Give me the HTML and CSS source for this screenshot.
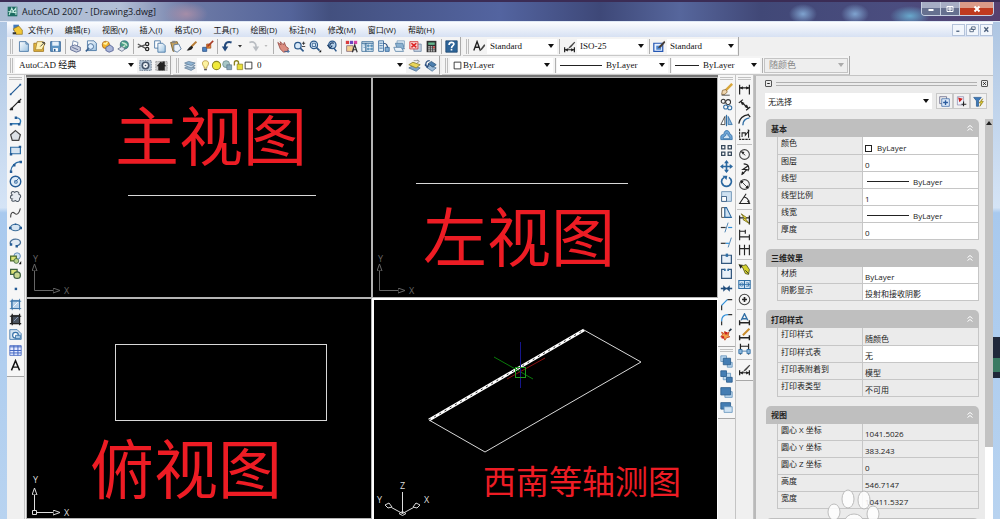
FILE: index.html
```html
<!DOCTYPE html>
<html lang="zh-CN">
<head>
  <meta charset="UTF-8">
  <title>AutoCAD 2007 - [Drawing3.dwg]</title>
  <link rel="stylesheet" href="styles.css">
</head>
<body>
<svg class="sprite" aria-hidden="true">
  <defs>
    <linearGradient id="sheet" x1="0" y1="0" x2="1" y2="1"><stop offset="0" stop-color="#fff"/><stop offset="1" stop-color="#9cc3e2"/></linearGradient>
    <marker id="tip" viewBox="0 0 8 6" refX="0" refY="3" markerWidth="8" markerHeight="6" markerUnits="userSpaceOnUse" orient="auto"><path d="M0 0.5 7 3 0 5.5z" fill="none" stroke="context-stroke"/></marker>
  </defs>

  <!-- standard toolbar -->
  <symbol id="new" viewBox="0 0 16 16"><path d="M3 2h8l3 3v9H3z" fill="url(#sheet)" stroke="#3f6f9f"/><path d="M11 2v3h3" stroke="#3f6f9f"/></symbol>
  <symbol id="open" viewBox="0 0 16 16"><path d="M1 14V4h5l1 2h6v8z" fill="#e9b93c" stroke="#9a7422"/><path d="M5 2h7l3 2-4 8H3z" fill="#fff3b8" stroke="#a88430"/><path d="M9 8l5-5m-3 0h3v3" stroke="#333"/></symbol>
  <symbol id="save" viewBox="0 0 16 16"><path d="M2 2h12v12H2z" fill="#5e95c4" stroke="#2d5f91"/><path d="M4 2h8v5H4z" fill="#e7f1fa"/><path d="M5 10h6v4H5z" fill="#fff"/><path d="M6 11h2v3H6z" fill="#2d5f91"/></symbol>
  <symbol id="plot" viewBox="0 0 16 16"><path d="M5 1l6 2-1 6-6-2z" fill="#fff" stroke="#6780a8"/><path d="M2 8l5-2 7 3v4l-5 2-7-3z" fill="#c5cbdd" stroke="#515f8a"/><path d="M4 9l7 3" stroke="#515f8a"/></symbol>
  <symbol id="preview" viewBox="0 0 16 16"><path d="M3 1h8l3 3v9H3z" fill="url(#sheet)" stroke="#3f6f9f"/><circle cx="7" cy="8" r="3.500" fill="#dceeff" stroke="#355d8a"/><path d="M4.500 10.500 1 14" stroke="#355d8a" stroke-width="2"/></symbol>
  <symbol id="publish" viewBox="0 0 16 16"><circle cx="6" cy="6" r="4.500" fill="#f4b52c" stroke="#a5631e"/><path d="M3 4l3 1 2-3" stroke="#fff3a0" stroke-width="2"/><path d="M6 9l5-3 4 3v4l-5 2-4-2z" fill="#a9b5d8" stroke="#4c5a90"/></symbol>
  <symbol id="dwf" viewBox="0 0 16 16"><circle cx="9" cy="6" r="5" fill="#4a9e84" stroke="#346a80"/><path d="M6 3c3 2 5 0 6 4M7 9l3-2" stroke="#c9e7d6" stroke-width="2"/><path d="M1 11l5-3 4 3-4 3z" fill="#dce2ed" stroke="#657089"/></symbol>
  <symbol id="cut" viewBox="0 0 16 16"><path d="M1 5l9 5M1 9l9-3" stroke="#555" stroke-width="1.500"/><circle cx="12.500" cy="5" r="2" stroke="#222" stroke-width="1.500"/><circle cx="12.500" cy="11" r="2" stroke="#222" stroke-width="1.500"/></symbol>
  <symbol id="copyclip" viewBox="0 0 16 16"><path d="M2 1h7v9H2z" fill="#fff" stroke="#3f6f9f"/><path d="M6 4h6l3 3v8H6z" fill="url(#sheet)" stroke="#3f6f9f"/></symbol>
  <symbol id="paste" viewBox="0 0 16 16"><path d="M2 3l8-1 3 9-8 3z" fill="#c9a35c" stroke="#735a2a"/><path d="M6 6l6-1 3 6-5 4-4-2z" fill="#eef4fb" stroke="#56779c"/><path d="M4 1h4v3H4z" fill="#888"/></symbol>
  <symbol id="match" viewBox="0 0 16 16"><path d="M14 2L8 8" stroke="#b67b34" stroke-width="2.500"/><path d="M8 7l2 2c-2 4-5 4-8 4 2-2 3-5 6-6z" fill="#222"/></symbol>
  <symbol id="block" viewBox="0 0 16 16"><path d="M2 9h5v5H2z" fill="#4d83c2" stroke="#2b5389"/><path d="M7 5h5v5H7z" fill="#e48c32" stroke="#a24d1e"/><path d="M15 1l-7 7" stroke="#a83a26" stroke-width="2"/></symbol>
  <symbol id="undo" viewBox="0 0 16 16"><path d="M13 3C8 1 4 4 5 10" stroke="#244a7c" stroke-width="2.500"/><path d="M1 8h8l-4 6z" fill="#244a7c"/></symbol>
  <symbol id="redo" viewBox="0 0 16 16"><path d="M3 3c5-2 9 1 8 7" stroke="#b9bdc2" stroke-width="2"/><path d="M15 8H7l4 6z" fill="#b9bdc2"/></symbol>
  <symbol id="drop" viewBox="0 0 16 16"><path d="M4 6h8l-4 5z" fill="#333"/></symbol>
  <symbol id="dropoff" viewBox="0 0 16 16"><path d="M5 6h6l-3 4z" fill="#bbb"/></symbol>
  <symbol id="pan" viewBox="0 0 16 16"><path d="M1 3l4 3-1-4 4 4 1-3 2 5 3 2-1 4-5 1-4-4z" fill="#dc8d80" stroke="#954a42"/><path d="M9 14h6m-2-2 2 2-2 2" stroke="#2c5f99"/></symbol>
  <symbol id="zoomrt" viewBox="0 0 16 16"><circle cx="6" cy="7" r="4" fill="#d8e9f8" stroke="#2b588a" stroke-width="1.500"/><path d="M9 10l4 4" stroke="#2b588a" stroke-width="2"/><path d="M11 4h4M13 2v4M11 8h4" stroke="#222"/></symbol>
  <symbol id="zoomwin" viewBox="0 0 16 16"><circle cx="6" cy="6" r="4.500" fill="#d8e9f8" stroke="#2b588a" stroke-width="1.500"/><path d="M4 4h4v4H4z" stroke="#2b588a"/><path d="M9 9l4 4" stroke="#2b588a" stroke-width="2"/><path d="M12 15h3v-3z" fill="#111"/></symbol>
  <symbol id="zoomprev" viewBox="0 0 16 16"><circle cx="9" cy="6" r="4.500" fill="#b5d0e9" stroke="#2b588a" stroke-width="1.500"/><path d="M11 4c-3-1-5 0-5 3m-3-1 3 4 3-3" stroke="#183a63" stroke-width="1.500"/><path d="M11 10l3 4" stroke="#2b588a" stroke-width="2"/></symbol>
  <symbol id="props" viewBox="0 0 16 16"><path d="M1 1h4v4H1z" fill="#d93b3b"/><path d="M6 1h4v4H6z" fill="#6a45c0"/><path d="M11 1h4v4h-4z" fill="#d743a4"/><path d="M2 7h8v7H2z" fill="#f4d08e" stroke="#8b6a7a"/><path d="M9 15l3-9 3 9m-5-3h4" stroke="#333" stroke-width="1.500"/></symbol>
  <symbol id="dcenter" viewBox="0 0 16 16"><path d="M1 2h14v12H1z" fill="#e6f0f8" stroke="#3a6c97"/><path d="M1 4h14M6 4v10" stroke="#3a6c97" stroke-width="1.500"/><path d="M8 6h2v2H8zM12 6h2v2h-2zM8 10h2v2H8zM12 10h2v2h-2zM3 6h2M3 9h2" fill="#5a91b9" stroke="#5a91b9"/></symbol>
  <symbol id="palettes" viewBox="0 0 16 16"><path d="M2 1h6v13H2z" fill="#dcebf7" stroke="#2f6298"/><path d="M3 4h4M3 7h4M3 10h4" stroke="#2f6298"/><path d="M8 4c4 0 5 2 5 7" stroke="#244a7c" stroke-width="1.500"/><path d="M10 9h5v5h-5z" fill="#84afd4" stroke="#2f6298"/></symbol>
  <symbol id="sheets" viewBox="0 0 16 16"><path d="M5 1h9v7H5z" fill="#dbe9f4" stroke="#7fa0bd"/><path d="M3 4h9l2 7H5z" fill="#8ab1d0" stroke="#5680a5"/><path d="M1 9h9l3 5H3z" fill="#e9f1f8" stroke="#5680a5"/></symbol>
  <symbol id="markup" viewBox="0 0 16 16"><path d="M6 5h9v9H6z" fill="#c5d3e3" stroke="#7088a5"/><path d="M1 2h10v9H1z" fill="#f7d4d4" stroke="#c33"/><path d="M3 4l6 5m0-5-6 5" stroke="#d22" stroke-width="2"/></symbol>
  <symbol id="calc" viewBox="0 0 16 16"><path d="M2 1h12v14H2z" fill="#303030"/><path d="M4 3h8v3H4z" fill="#63b58c"/><path d="M4 8.500h8M4 11h8M4 13.500h8" stroke="#ddd" stroke-dasharray="2 1" stroke-width="1.500"/><path d="M10 8h2v2h-2z" fill="#d33"/></symbol>
  <symbol id="help" viewBox="0 0 16 16"><path d="M1 1h14v14H1z" fill="#2d6498" stroke="#1f4870"/><path d="M5 6c0-4 6-4 6-1 0 2-3 2-3 5m0 1v2" stroke="#fff" stroke-width="2"/></symbol>
  <symbol id="textstyle" viewBox="0 0 16 16"><path d="M1 13L5 2l4 11M3 9h5" stroke="#222" stroke-width="1.700"/><path d="M8 14l2-4 4-5 1 2-4 5z" fill="#444"/></symbol>
  <symbol id="dimstyle" viewBox="0 0 16 16"><path d="M2 9v6M14 9v6M2 12h12" stroke="#222" stroke-width="1.500"/><path d="M2 12l4-2v4zM14 12l-4-2v4z" fill="#222"/><path d="M14 2L8 8l-2 3 4-2 5-6z" fill="#444"/></symbol>
  <symbol id="tablestyle" viewBox="0 0 16 16"><path d="M1 4h11v10H1z" fill="#e8f1ff" stroke="#2457b4" stroke-width="1.500"/><path d="M4 7h6v5H4z" fill="#4d85ce"/><path d="M14 1L8 7l-2 3 4-1 5-6z" fill="#443c36"/></symbol>

  <!-- workspaces and layers -->
  <symbol id="gear" viewBox="0 0 16 16"><path d="M1 2h14v12H1z" fill="#b9cadb" stroke="#586b80" stroke-dasharray="2 1"/><circle cx="8" cy="8" r="4" fill="#f5f8fb" stroke="#45566b" stroke-width="2"/><circle cx="8" cy="8" r="1" fill="#45566b"/></symbol>
  <symbol id="wshome" viewBox="0 0 16 16"><path d="M1 3h14v11H1z" fill="#ccc" stroke="#999" stroke-dasharray="2 1"/><path d="M2 9l5-6 2 2V3h3v4l2 2h-2v5H4V9z" fill="#222"/></symbol>
  <symbol id="layers" viewBox="0 0 16 16"><path d="M2 11l5-2 8 2-5 3z" fill="#9db6cc" stroke="#68849f"/><path d="M2 8l5-2 8 2-5 3z" fill="#c9dceb" stroke="#68849f"/><path d="M2 5l5-2 8 2-5 3z" fill="#8fb4d3" stroke="#68849f"/></symbol>
  <symbol id="layercur" viewBox="0 0 16 16"><path d="M1 11l5-3 9 3-5 4z" fill="#7da3c7" stroke="#4d7397"/><path d="M1 7l5-3 9 3-5 4z" fill="#e9d65a" stroke="#877b2e"/><path d="M7 2h6m-2-1 3 2-3 2" stroke="#888"/></symbol>
  <symbol id="layerprev" viewBox="0 0 16 16"><path d="M3 10l5-2 7 3-5 4z" fill="#9dbbd7" stroke="#4f779d"/><path d="M5 6l4-3 6 4-4 3z" fill="#4c7fae" stroke="#31577d"/><path d="M7 2C3 2 1 5 3 9M1 7l3 3 2-4" stroke="#244a7c" stroke-width="1.500"/></symbol>
  <symbol id="bulb" viewBox="0 0 16 16"><path d="M8 1c-6 0-5 6-2 9v2h4v-2c3-3 4-9-2-9z" fill="#fdf3a0" stroke="#a9862c"/><path d="M6 14h4" stroke="#555" stroke-width="2"/></symbol>
  <symbol id="sun" viewBox="0 0 16 16"><circle cx="8" cy="8" r="6" fill="#f1ea3b" stroke="#8e8a25" stroke-width="1.500"/></symbol>
  <symbol id="vpsun" viewBox="0 0 16 16"><circle cx="6" cy="6" r="5" fill="#a9c7c7" stroke="#628084"/><path d="M7 7h7v7H7z" fill="#8aa9bb" stroke="#5b7588"/></symbol>
  <symbol id="lock" viewBox="0 0 16 16"><path d="M2 8V4c0-4 6-4 6 0v3" stroke="#8c8222" stroke-width="2"/><path d="M6 6h8v8H6z" fill="#e8df3a" stroke="#8c8222"/></symbol>
  <symbol id="swatch" viewBox="0 0 16 16"><path d="M2 2h12v12H2z" fill="#fff" stroke="#222" stroke-width="1.500"/></symbol>

  <!-- draw -->
  <symbol id="line" viewBox="0 0 16 16"><path d="M2 14L14 2" stroke="#245c96" stroke-width="1.500"/><path d="M1 13h2v2H1zM13 1h2v2h-2z" fill="#245c96"/></symbol>
  <symbol id="xline" viewBox="0 0 16 16"><path d="M1 15L15 1" stroke="#222" stroke-width="1.500"/><path d="M2 12h3v3H2zM11 3h3v3h-3z" fill="#222"/></symbol>
  <symbol id="pline" viewBox="0 0 16 16"><path d="M2 12h11c3-4 0-8-5-7" stroke="#2f79b5" stroke-width="1.700"/><path d="M1 11h3v3H1zM11 11h3v3h-3zM7 3h3v3H7z" fill="#245c96"/></symbol>
  <symbol id="polygon" viewBox="0 0 16 16"><path d="M8 2l6 5-2 7H4L2 7z" fill="#dde2e7" stroke="#444" stroke-width="1.500"/></symbol>
  <symbol id="rect" viewBox="0 0 16 16"><path d="M2 4h12v8H2z" fill="#d7e4f0" stroke="#2f6ea5" stroke-width="1.500"/><path d="M1 11h3v3H1zM12 2h3v3h-3z" fill="#245c96"/></symbol>
  <symbol id="arc" viewBox="0 0 16 16"><path d="M2 14C3 7 7 3 14 2" stroke="#2f6ea5" stroke-width="1.500"/><path d="M1 13h3v3H1zM5 5h3v3H5zM13 1h3v3h-3z" fill="#245c96"/></symbol>
  <symbol id="circle" viewBox="0 0 16 16"><circle cx="8" cy="8" r="6.500" fill="#e0edf8" stroke="#245c96" stroke-width="1.700"/><path d="M8 8l4-4M7 7h3v3H7z" stroke="#245c96"/></symbol>
  <symbol id="revcloud" viewBox="0 0 16 16"><path d="M4 6c-3-2 0-6 3-3 2-2 6-1 5 2 3 1 3 4 1 5 1 4-3 5-5 3-3 2-6 0-4-2-3 0-3-4 0-5z" fill="#e6ebf1" stroke="#4d5763" stroke-width="1.300"/></symbol>
  <symbol id="spline" viewBox="0 0 16 16"><path d="M2 14c0-7 3-7 5-5s5 2 7-6" stroke="#444" stroke-width="1.300"/></symbol>
  <symbol id="ellipse" viewBox="0 0 16 16"><ellipse cx="8" cy="8" rx="6" ry="4" fill="#d6e5f2" stroke="#3c6d99" stroke-width="1.500"/><path d="M0 7h3v3H0zM13 7h3v3h-3zM7 3h2v2H7z" fill="#245c96"/></symbol>
  <symbol id="ellarc" viewBox="0 0 16 16"><path d="M2 10C0 6 5 3 10 4s6 6 0 8" fill="#e2ebf4" stroke="#4a7199" stroke-width="1.500"/><path d="M1 9h3v3H1zM8 11h3v3H8z" fill="#245c96"/></symbol>
  <symbol id="insert" viewBox="0 0 16 16"><circle cx="10" cy="5" r="4" fill="#cfe2f2" stroke="#4c7db0"/><path d="M2 5h7v6H2z" fill="#dce276" stroke="#4c6b2c" stroke-width="1.500"/><circle cx="9" cy="11" r="3" fill="#b7d08a" stroke="#3e6640"/><path d="M12 15h3v-4z" fill="#111"/></symbol>
  <symbol id="mkblock" viewBox="0 0 16 16"><path d="M2 3h8v6H2z" fill="#dce276" stroke="#3d6040" stroke-width="1.500"/><circle cx="10" cy="10" r="4" fill="#c8d790" stroke="#3d6040" stroke-width="1.500"/></symbol>
  <symbol id="point" viewBox="0 0 16 16"><path d="M7 7h3v3H7z" fill="#245c96"/></symbol>
  <symbol id="hatch" viewBox="0 0 16 16"><path d="M3 3h10v10H3z" fill="#b8d2ea" stroke="#3671a7"/><path d="M1 4h14M1 13h14M4 1v14M13 1v14" stroke="#3671a7"/><path d="M5 11l6-6" stroke="#fff"/></symbol>
  <symbol id="gradient" viewBox="0 0 16 16"><path d="M3 3h10v10H3z" fill="#4b5560" stroke="#222"/><path d="M1 4h14M1 13h14M4 1v14M13 1v14" stroke="#222" stroke-width="1.500"/><path d="M6 10l5-5" stroke="#9ac"/></symbol>
  <symbol id="region" viewBox="0 0 16 16"><path d="M1 2h9l5 5v7H1z" fill="#d4e4f2" stroke="#3671a7"/><circle cx="8" cy="9" r="3.500" fill="#fff" stroke="#3671a7" stroke-width="1.500"/><path d="M8 9h6v4H8z" fill="#a9c9e4" stroke="#3671a7"/></symbol>
  <symbol id="table" viewBox="0 0 16 16"><path d="M1 2h14v12H1z" fill="#e6ebff" stroke="#4165c0"/><path d="M1 3.500h14M1 8h14M1 11h14M6 2v12M11 2v12" stroke="#4165c0" stroke-width="1.200"/></symbol>
  <symbol id="mtext" viewBox="0 0 16 16"><path d="M3 14L8 2l5 12M5 10h6" stroke="#111" stroke-width="1.800"/></symbol>

  <!-- modify -->
  <symbol id="erase" viewBox="0 0 16 16"><path d="M15 1L7 9" stroke="#d8a63a" stroke-width="3"/><path d="M3 9l4-1 2 3-3 3H2z" fill="#f0d7b0" stroke="#8b6a3c"/><path d="M2 15h10" stroke="#333"/></symbol>
  <symbol id="copy" viewBox="0 0 16 16"><circle cx="4" cy="4" r="2.500" stroke="#333" stroke-width="1.300"/><circle cx="10" cy="5" r="3" stroke="#333" stroke-width="1.300"/><circle cx="7" cy="11" r="2.500" stroke="#2f6ea5" stroke-width="1.300"/><circle cx="12" cy="12" r="2.500" stroke="#2f6ea5" stroke-width="1.300"/></symbol>
  <symbol id="mirror" viewBox="0 0 16 16"><path d="M6 3v10H1z" fill="#fff" stroke="#333"/><path d="M10 3v10h5z" fill="#8db7dc" stroke="#2f6ea5"/><path d="M8 1v14" stroke="#2f6ea5" stroke-width="1.500"/></symbol>
  <symbol id="offset" viewBox="0 0 16 16"><path d="M1 13V9c0-2 3-2 4-3 0-6 7-5 7 0 3 1 3 3 3 7z" fill="#6ea5d6" stroke="#2f6ea5"/><path d="M4 12v-2l3-2c0-3 3-3 3 0l2 2v2z" fill="#d3e5f5" stroke="#2f6ea5"/></symbol>
  <symbol id="array" viewBox="0 0 16 16"><path d="M2 2h4v4H2zM10 2h4v4h-4zM2 10h4v4H2zM10 10h4v4h-4z" fill="#fff" stroke="#35475a" stroke-width="1.500"/></symbol>
  <symbol id="move" viewBox="0 0 16 16"><path d="M8 2v12M2 8h12" stroke="#2a679f" stroke-width="2"/><path d="M8 0l3 4H5zM8 16l3-4H5zM0 8l4-3v6zM16 8l-4-3v6z" fill="#2a679f"/></symbol>
  <symbol id="rotate" viewBox="0 0 16 16"><path d="M5 3c-6 4-2 11 3 11s9-7 3-11" stroke="#2a679f" stroke-width="2"/><path d="M3 1h6l-1 5z" fill="#2a679f"/></symbol>
  <symbol id="scale" viewBox="0 0 16 16"><path d="M2 2h12v12H2z" fill="#cfe1f1" stroke="#5f88ad"/><path d="M2 8h6v6H2z" fill="#fff" stroke="#2a4f78"/></symbol>
  <symbol id="stretch" viewBox="0 0 16 16"><path d="M2 2h4v12H2z" fill="#fff" stroke="#333"/><path d="M6 2h2l6 12H6z" fill="#cfe1f1" stroke="#2a679f" stroke-width="1.300"/></symbol>
  <symbol id="trim" viewBox="0 0 16 16"><path d="M6 14l4-12" stroke="#2f6ea5"/><path d="M1 8h6" stroke="#333" stroke-width="1.500"/><path d="M10 8h5" stroke="#2f8fd8" stroke-width="1.500"/></symbol>
  <symbol id="extend" viewBox="0 0 16 16"><path d="M10 14l4-12" stroke="#2f6ea5"/><path d="M1 9h6" stroke="#333" stroke-width="1.500"/><path d="M7 9h4" stroke="#2f8fd8" stroke-width="1.500"/></symbol>
  <symbol id="breakpt" viewBox="0 0 16 16"><path d="M2 4h12v10H2z" fill="#e8f0f8" stroke="#33587e" stroke-width="1.500"/><path d="M7 2h3v4H7z" fill="#2f6ea5"/></symbol>
  <symbol id="break" viewBox="0 0 16 16"><path d="M6 3H2v11h12V3h-4" fill="#e8f0f8" stroke="#33587e" stroke-width="1.500"/><path d="M5 2h2v3H5zM9 2h2v3H9z" fill="#2f6ea5"/></symbol>
  <symbol id="join" viewBox="0 0 16 16"><path d="M1 8h14" stroke="#1f4c7c" stroke-width="2"/><path d="M8 8L4 4v8zM8 8l4-4v8z" fill="#1f4c7c"/></symbol>
  <symbol id="chamfer" viewBox="0 0 16 16"><path d="M2 15V9M9 2h6" stroke="#333" stroke-width="1.500"/><path d="M2 9l7-7" stroke="#2f8fd8" stroke-width="1.500"/></symbol>
  <symbol id="fillet" viewBox="0 0 16 16"><path d="M2 15v-5M10 2h5" stroke="#333" stroke-width="1.500"/><path d="M2 10c0-5 3-8 8-8" stroke="#2f8fd8" stroke-width="1.500"/></symbol>
  <symbol id="explode" viewBox="0 0 16 16"><path d="M6 4l2 3 3-2-1 4 2 2-4 1-2 3-2-4-3 0 2-3-1-3 3 2z" fill="#f0a04a" stroke="#c2401c"/><path d="M2 10h3v3H2zM6 5h3v3H6z" fill="#c22"/><path d="M11 4l3-3" stroke="#234" stroke-width="2"/></symbol>
  <symbol id="front" viewBox="0 0 16 16"><path d="M1 1h7v7H1zM9 9h6v6H9z" fill="#b9d6ee" stroke="#6393bb"/><path d="M4 4h9v8H4z" fill="#447db3" stroke="#2a5c8c"/></symbol>
  <symbol id="back" viewBox="0 0 16 16"><path d="M4 4h9v8H4z" fill="#bcd8ee" stroke="#6393bb"/><path d="M1 1h7v7H1zM8 9h7v6H8z" fill="#447db3" stroke="#2a5c8c"/></symbol>
  <symbol id="above" viewBox="0 0 16 16"><path d="M6 7h9v7H6z" fill="#bcd8ee" stroke="#6393bb"/><path d="M1 2h12v9H1z" fill="#447db3" stroke="#2a5c8c"/></symbol>
  <symbol id="under" viewBox="0 0 16 16"><path d="M1 2h12v8H1z" fill="#447db3" stroke="#2a5c8c"/><path d="M5 7h10v7H5z" fill="#cfe3f3" stroke="#6393bb"/></symbol>

  <!-- dimension -->
  <symbol id="dimlin" viewBox="0 0 16 16"><path d="M2 2v12M14 2v12M2 6h12" stroke="#222" stroke-width="1.500"/><path d="M2 6l4-2v4zM14 6l-4-2v4z" fill="#222"/></symbol>
  <symbol id="dimali" viewBox="0 0 16 16"><path d="M1 6l5-4M10 15l5-4M3 4l10 9" stroke="#222" stroke-width="1.500"/><path d="M3 4l5 2-3 3zM13 13l-5-2 3-3z" fill="#222"/></symbol>
  <symbol id="dimarc" viewBox="0 0 16 16"><path d="M1 13C2 6 6 3 13 2M12 1l3 4" stroke="#222" stroke-width="1.500"/><path d="M6 15c0-5 2-8 8-9" stroke="#2f6ea5" stroke-width="1.700"/></symbol>
  <symbol id="dimord" viewBox="0 0 16 16"><path d="M2 1v13h13" stroke="#222" stroke-width="1.300" stroke-dasharray="3 1"/><path d="M5 11V6h4v3l4-5v8M12 2l2 2" stroke="#222" stroke-width="1.300"/></symbol>
  <symbol id="dimrad" viewBox="0 0 16 16"><circle cx="8" cy="8" r="6" stroke="#444" stroke-width="1.300"/><path d="M9 9L3 4" stroke="#222"/><path d="M4 4l4 1-2 3z" fill="#222"/></symbol>
  <symbol id="dimjog" viewBox="0 0 16 16"><path d="M7 1c6 0 8 5 5 9M13 3L6 8h5l-6 6" stroke="#222" stroke-width="1.400"/><path d="M4 15l1-5 3 3z" fill="#222"/></symbol>
  <symbol id="dimdia" viewBox="0 0 16 16"><circle cx="8" cy="8" r="6" stroke="#444" stroke-width="1.300"/><path d="M4 4l8 8" stroke="#222"/><path d="M3 3l4 1-3 3zM13 13l-4-1 3-3z" fill="#222"/></symbol>
  <symbol id="dimang" viewBox="0 0 16 16"><path d="M10 1L2 13h13M7 5c4 0 6 3 7 8" stroke="#222" stroke-width="1.300"/><path d="M14 13l-3-3 3-1z" fill="#222"/></symbol>
  <symbol id="qdim" viewBox="0 0 16 16"><path d="M2 3v11M14 3v11M2 6h12" stroke="#222" stroke-width="1.500"/><path d="M4 1l7 5-2 1 5 6-8-5 2-1z" fill="#f0e13a" stroke="#6d6414"/></symbol>
  <symbol id="dimbase" viewBox="0 0 16 16"><path d="M2 2v13M9 2v5M14 8v7M2 4h7M2 11h12" stroke="#222" stroke-width="1.400"/></symbol>
  <symbol id="dimcont" viewBox="0 0 16 16"><path d="M2 2v13M8 2v13M14 2v13M2 7h12" stroke="#222" stroke-width="1.400"/></symbol>
  <symbol id="leader" viewBox="0 0 16 16"><path d="M1 2l6 1 3-1 4 6-1 6-4-1-3-7z" fill="#d5d22e" stroke="#4e4d19"/><path d="M1 2l5 1-3 4z" fill="#222"/><path d="M9 9l4 4" stroke="#222"/></symbol>
  <symbol id="toler" viewBox="0 0 16 16"><path d="M1 3h14v10H1zM8 3v10" fill="#d4e6f5" stroke="#2f6ea5" stroke-width="1.300"/><circle cx="4.500" cy="8" r="2" stroke="#2f6ea5"/><path d="M10 6h3v4h-3M1 8h14" stroke="#2f6ea5"/></symbol>
  <symbol id="center" viewBox="0 0 16 16"><circle cx="8" cy="8" r="6.500" stroke="#444" stroke-width="1.300"/><path d="M8 5v6M5 8h6" stroke="#222" stroke-width="2"/></symbol>
  <symbol id="dimedit" viewBox="0 0 16 16"><path d="M4 9l4-8 4 8M5 7h6" stroke="#2f6ea5" stroke-width="1.700"/><path d="M2 9v6M14 9v6M2 12h12" stroke="#222" stroke-width="1.700"/></symbol>
  <symbol id="dimtedit" viewBox="0 0 16 16"><path d="M14 1L6 9" stroke="#c98b2a" stroke-width="2.500"/><path d="M2 9v6M14 9v6M2 12h12" stroke="#222" stroke-width="1.700"/></symbol>
  <symbol id="dimupd" viewBox="0 0 16 16"><path d="M3 1v13M13 1v13M3 4h10" stroke="#222" stroke-width="1.500"/><path d="M1 8h4v5H1zM11 8h4v5h-4zM5 10h6" fill="#8cb6da" stroke="#2f6ea5"/></symbol>

  <!-- properties palette -->
  <symbol id="pickadd" viewBox="0 0 16 16"><path d="M1 1h10v10H1z" stroke="#557"/><path d="M4 4h11v11H4z" fill="#e1edfb" stroke="#2b5c9e"/><path d="M9.500 6v7M6 9.500h7" stroke="#2b5c9e" stroke-width="2"/></symbol>
  <symbol id="selobj" viewBox="0 0 16 16"><path d="M2 1h9v12H2z" fill="#eef3fa" stroke="#88a"/><path d="M3 2l7 2-5 5z" fill="#c22"/><path d="M11 8v7M8 12h7" stroke="#222" stroke-width="1.500"/></symbol>
  <symbol id="qselect" viewBox="0 0 16 16"><path d="M1 2h11l-4 5v8H5V7z" fill="#3d79b8" stroke="#23548b"/><path d="M14 4l-5 6h3l-2 5 5-7h-3z" fill="#f2dc30" stroke="#8d7d19"/></symbol>
  <symbol id="chev" viewBox="0 0 16 16"><path d="M3 7l5-4 5 4M3 13l5-4 5 4" stroke="#fff" stroke-width="2"/></symbol>
</svg>

<header class="titlebar">
  <svg class="icon" viewBox="0 0 16 16"><path d="M1 1h14v14H1z" fill="#1d6d62"/><path d="M3 13L7 3l2 5 4-5v10M2 8l12 2" stroke="#c5ece0" stroke-width="1.500"/></svg>
  <h1>AutoCAD 2007 - [Drawing3.dwg]</h1>
  <div class="window-buttons">
    <button aria-label="最小化"><svg viewBox="0 0 16 16"><path d="M3 10h10" stroke="#fff" stroke-width="4"/></svg></button>
    <button aria-label="还原"><svg viewBox="0 0 16 16"><path d="M2 3h12v10H2z" stroke="#fff" stroke-width="2"/><path d="M6 6h4v4H6z" stroke="#fff" stroke-width="2"/></svg></button>
    <button class="close" aria-label="关闭"><svg viewBox="0 0 16 16"><path d="M3 3l10 10M13 3L3 13" stroke="#fff" stroke-width="4"/></svg></button>
  </div>
</header>

<div class="window">
  <nav class="menubar">
    <svg class="icon" viewBox="0 0 16 16"><path d="M2 1h8v9H2z" fill="#3f79bd"/><path d="M2 7l8-4 5 6v6H6z" fill="#f2c838" stroke="#8c6c1b"/><path d="M1 12h5v3H1z" fill="#333"/></svg>
    <a href="#">文件(F)</a>
    <a href="#">编辑(E)</a>
    <a href="#">视图(V)</a>
    <a href="#">插入(I)</a>
    <a href="#">格式(O)</a>
    <a href="#">工具(T)</a>
    <a href="#">绘图(D)</a>
    <a href="#">标注(N)</a>
    <a href="#">修改(M)</a>
    <a href="#">窗口(W)</a>
    <a href="#">帮助(H)</a>
    <div class="mdi-buttons">
      <button aria-label="最小化图形"><svg viewBox="0 0 16 16"><path d="M3 12h7" stroke="#4c5f7c" stroke-width="3"/></svg></button>
      <button aria-label="还原图形"><svg viewBox="0 0 16 16"><path d="M6 2h8v6H6zM2 7h8v6H2z" fill="#fff" stroke="#4c5f7c" stroke-width="2"/></svg></button>
      <button aria-label="关闭图形"><svg viewBox="0 0 16 16"><path d="M3 3l9 10M12 3L3 13" stroke="#4c5f7c" stroke-width="3"/></svg></button>
    </div>
  </nav>

  <div class="toolbar-row">
    <div class="toolbar" data-icons="new open save | plot preview publish dwf | cut copyclip paste match block | undo drop redo dropoff | pan zoomrt zoomwin zoomprev | props dcenter palettes sheets markup calc | help"></div>
    <div class="toolbar" data-icons="textstyle">
      <select class="style-select" aria-label="文字样式"><option>Standard</option></select>
      <i class="sep"></i>
      <button class="tool" aria-label="dimstyle"><svg><use href="#dimstyle"/></svg></button>
      <select class="style-select" aria-label="标注样式"><option>ISO-25</option></select>
      <i class="sep"></i>
      <button class="tool" aria-label="tablestyle"><svg><use href="#tablestyle"/></svg></button>
      <select class="style-select" aria-label="表格样式"><option>Standard</option></select>
    </div>
  </div>

  <div class="toolbar-row">
    <div class="toolbar" data-icons="">
      <select class="workspace-select" aria-label="工作空间"><option>AutoCAD 经典</option></select>
      <button class="tool" aria-label="gear"><svg><use href="#gear"/></svg></button>
      <button class="tool" aria-label="wshome"><svg><use href="#wshome"/></svg></button>
    </div>
    <div class="toolbar" data-icons="layers">
      <label class="combo layer-combo">
        <svg><use href="#bulb"/></svg><svg><use href="#sun"/></svg><svg><use href="#vpsun"/></svg><svg><use href="#lock"/></svg><svg><use href="#swatch"/></svg>
        <select aria-label="图层"><option>0</option></select>
      </label>
      <button class="tool" aria-label="layercur"><svg><use href="#layercur"/></svg></button>
      <button class="tool" aria-label="layerprev"><svg><use href="#layerprev"/></svg></button>
    </div>
    <div class="toolbar" data-icons="">
      <label class="combo color-combo"><svg><use href="#swatch"/></svg><select aria-label="颜色"><option>ByLayer</option></select></label>
      <i class="sep"></i>
      <label class="combo type-combo"><i class="rule"></i><select aria-label="线型"><option>ByLayer</option></select></label>
      <i class="sep"></i>
      <label class="combo weight-combo"><i class="rule"></i><select aria-label="线宽"><option>ByLayer</option></select></label>
      <i class="sep"></i>
      <select class="plot-select" aria-label="打印样式" disabled><option>随颜色</option></select>
    </div>
  </div>

  <main class="workspace">
    <div class="dock">
      <div class="dockbar" data-icons="line xline pline polygon rect arc circle revcloud spline ellipse ellarc insert mkblock point hatch gradient region table mtext"></div>
    </div>

    <div class="viewports">
      <section class="viewport">
        <svg>
          <text class="note" x="88" y="82">主视图</text>
          <path class="edge" d="M101 117.500H289"/>
          <g class="ucs dim">
            <path d="M7.500 212.500V193" marker-end="url(#tip)"/><path d="M7.500 212.500H26" marker-end="url(#tip)"/>
            <text x="6" y="184">Y</text><text x="37" y="216">X</text>
          </g>
        </svg>
      </section>
      <section class="viewport">
        <svg>
          <text class="note" x="50" y="183">左视图</text>
          <path class="edge" d="M43 105.500H255"/>
          <g class="ucs dim">
            <path d="M6.500 212.500V193" marker-end="url(#tip)"/><path d="M6.500 212.500H25" marker-end="url(#tip)"/>
            <text x="5" y="184">Y</text><text x="36" y="216">X</text>
          </g>
        </svg>
      </section>
      <section class="viewport">
        <svg>
          <rect class="edge" x="88.500" y="45.500" width="211" height="76"/>
          <text class="note" x="63" y="194">俯视图</text>
          <g class="ucs">
            <path d="M5.500 211.500h4v4h-4z"/>
            <path d="M7.500 211.500V196" marker-end="url(#tip)"/><path d="M9.500 213.500H26" marker-end="url(#tip)"/>
            <text x="6" y="184">Y</text><text x="37" y="217">X</text>
          </g>
        </svg>
      </section>
      <section class="viewport active">
        <svg>
          <path class="edge" d="M55 120L111 152 267 62 210 30"/>
          <path class="picked" d="M55 120L210 30"/>
          <path class="picked-gap" d="M55 120L210 30"/>
          <path d="M120 57l39 22" stroke="#0a7a0a"/>
          <path d="M133 79l38-21" stroke="#8a1010"/>
          <path d="M146.500 42v46" stroke="#16168a"/>
          <rect x="141.500" y="67.500" width="10" height="10" stroke="#1f9a1f"/>
          <text class="note small" x="109" y="194">西南等轴测图</text>
          <g class="ucs">
            <path d="M28.500 213.500V192M28.500 213.500l-11-6M28.500 213.500l11-6"/>
            <path d="M11 205l4-2 3 4-4 1zM46 205l-4-2-3 4 4 1zM25 213.500l3.500-2 3.500 2-3.500 2z"/>
            <text x="26" y="189">Z</text><text x="3" y="203">Y</text><text x="50" y="203">X</text>
          </g>
        </svg>
      </section>
    </div>

    <div class="dock">
      <div class="dockbar" data-icons="erase copy mirror offset array move rotate scale stretch trim extend breakpt break join chamfer fillet explode"></div>
      <div class="dockbar" data-icons="front back above under"></div>
    </div>
    <div class="dock">
      <div class="dockbar even" data-icons="dimlin dimali dimarc dimord | dimrad dimjog dimdia dimang | qdim dimbase dimcont | leader toler center | dimedit dimtedit dimupd | dimstyle"></div>
    </div>

    <aside class="palette">
      <div class="palette-grip">
        <button aria-label="自动隐藏"><svg viewBox="0 0 16 16"><path d="M4 8h8" stroke="#111" stroke-width="3"/></svg></button>
        <i></i>
        <button aria-label="关闭特性"><svg viewBox="0 0 16 16"><path d="M4 4l8 8M12 4l-8 8" stroke="#111" stroke-width="3"/></svg></button>
      </div>
      <div class="palette-top">
        <select aria-label="选择"><option>无选择</option></select>
        <button aria-label="切换 PICKADD"><svg><use href="#pickadd"/></svg></button>
        <button aria-label="选择对象"><svg><use href="#selobj"/></svg></button>
        <button aria-label="快速选择"><svg><use href="#qselect"/></svg></button>
      </div>
      <div class="palette-body">
        <div class="groups">
          <section class="group">
            <h2>基本 <svg><use href="#chev"/></svg></h2>
            <table>
              <tr><th>颜色</th><td class="edit"><i class="box"></i>ByLayer</td></tr>
              <tr><th>图层</th><td class="edit">0</td></tr>
              <tr><th>线型</th><td class="edit"><i class="rule"></i>ByLayer</td></tr>
              <tr><th>线型比例</th><td class="edit">1</td></tr>
              <tr><th>线宽</th><td class="edit"><i class="rule"></i>ByLayer</td></tr>
              <tr><th>厚度</th><td class="edit">0</td></tr>
            </table>
          </section>
          <section class="group">
            <h2>三维效果 <svg><use href="#chev"/></svg></h2>
            <table>
              <tr><th>材质</th><td class="edit">ByLayer</td></tr>
              <tr><th>阴影显示</th><td class="edit">投射和接收阴影</td></tr>
            </table>
          </section>
          <section class="group">
            <h2>打印样式 <svg><use href="#chev"/></svg></h2>
            <table>
              <tr><th>打印样式</th><td>随颜色</td></tr>
              <tr><th>打印样式表</th><td class="edit">无</td></tr>
              <tr><th>打印表附着到</th><td>模型</td></tr>
              <tr><th>打印表类型</th><td>不可用</td></tr>
            </table>
          </section>
          <section class="group">
            <h2>视图 <svg><use href="#chev"/></svg></h2>
            <table>
              <tr><th>圆心 X 坐标</th><td>1041.5026</td></tr>
              <tr><th>圆心 Y 坐标</th><td>383.243</td></tr>
              <tr><th>圆心 Z 坐标</th><td>0</td></tr>
              <tr><th>高度</th><td>546.7147</td></tr>
              <tr><th>宽度</th><td>10411.5327</td></tr>
            </table>
          </section>
          <section class="group"><h2></h2></section>
        </div>
        <div class="scrollbar"><svg viewBox="0 0 8 8"><path d="M1 6l3-4 3 4z" fill="#222"/></svg><i></i></div>
      </div>
      <svg class="paw" viewBox="0 0 56 32">
        <g fill="#fff" stroke="#b5b5b5"><ellipse cx="22" cy="12" rx="6" ry="9"/><ellipse cx="38" cy="13" rx="6" ry="9"/><ellipse cx="8" cy="25" rx="6" ry="8"/><ellipse cx="47" cy="27" rx="6" ry="8"/><ellipse cx="28" cy="34" rx="9" ry="7"/></g>
      </svg>
    </aside>
  </main>
</div>
<div class="side-tab"></div>

<script>
  // toolbars list their icons in data-icons, "|" is a separator
  document.querySelectorAll("[data-icons]").forEach(bar => {
    const parts = document.createDocumentFragment();
    const grip = document.createElement("span");
    grip.className = "grip";
    parts.appendChild(grip);

    bar.dataset.icons.split(" ").filter(Boolean).forEach(name => {
      if (name === "|") {
        const sep = document.createElement("i");
        sep.className = "sep";
        parts.appendChild(sep);
        return;
      }
      const button = document.createElement("button");
      button.className = name.startsWith("drop") ? "tool narrow" : "tool";
      button.setAttribute("aria-label", name);
      button.innerHTML = `<svg><use href="#${name}"/></svg>`;
      parts.appendChild(button);
    });

    bar.prepend(parts);
  });
</script>
</body>
</html>
```

FILE: styles.css
```css
* {
  box-sizing: border-box;
}
body {
  margin: 0;
  height: 100vh;
  overflow: hidden;
  display: flex;
  flex-direction: column;
  padding: 0 7px;
  background: linear-gradient(#a9c2e0 0, #d5e4f6 40%, #a8c9ee 41%, #b8d3f0 100%);
  color: #222;
  font-family: "Open Sans", "Noto Sans CJK SC", sans-serif;
  font-size: 8px;
}
button, select {
  font: inherit;
  color: inherit;
  border: 0;
  padding: 0;
  margin: 0;
  background: none;
}
svg {
  fill: none;
}
.sprite {
  position: absolute;
  width: 0;
  height: 0;
}
.icon {
  width: 11px;
  height: 11px;
  flex: none;
}

/* title bar */
.titlebar {
  display: flex;
  align-items: center;
  height: 22px;
  flex: none;
  margin: 0 -7px;
  padding: 0 2px 0 7px;
  border-top: 2px solid #3b2c55;
  border-bottom: 1px solid #dfe8f5;
  background:
    radial-gradient(ellipse 22px 12px at 186px 12px, #a58da8, transparent),
    radial-gradient(ellipse 14px 10px at 803px 12px, #7fa3cf, transparent),
    radial-gradient(ellipse 14px 10px at 855px 12px, #7fa3cf, transparent),
    radial-gradient(ellipse 20px 10px at 910px 14px, #68a8cc, transparent),
    linear-gradient(90deg, #a8bad2, #b3bfd6 120px, #6d7aa6 190px, #54649a 290px, #43507f 330px, #5364a0 500px, #3e4878 600px, #56669c 680px, #414877 760px, #4b4d7f 900px, #56406f);
}
.titlebar h1 {
  flex: 1;
  margin: 0 0 0 4px;
  font-size: 9px;
  font-weight: 400;
  line-height: 16px;
  color: #15181f;
}
.window-buttons {
  display: flex;
  align-self: flex-start;
  margin-right: 4px;
  border: 1px solid #c6cfe0;
  border-top: 0;
  border-radius: 0 0 4px 4px;
  overflow: hidden;
}
.window-buttons button {
  width: 19px;
  height: 13px;
  border-right: 1px solid #c6cfe0;
  background: linear-gradient(#a6adc4 50%, #66708f 50%);
}
.window-buttons .close {
  width: 33px;
  border: 0;
  background: linear-gradient(#dc9a88 50%, #c03a20 50%);
}
.window-buttons svg {
  width: 8px;
  height: 8px;
  display: block;
  margin: auto;
}

.window {
  flex: 1;
  min-height: 0;
  display: flex;
  flex-direction: column;
  background: #f0f0f0;
}

/* menu */
.menubar {
  display: flex;
  align-items: center;
  gap: 12px;
  height: 15px;
  flex: none;
  padding-left: 5px;
  background: linear-gradient(#fbfcfe, #d7e1f3);
}
.menubar .icon {
  margin-right: -7px;
}
.menubar a {
  color: #111;
  text-decoration: none;
  white-space: nowrap;
}
.mdi-buttons {
  display: flex;
  gap: 1px;
  margin-left: auto;
}
.mdi-buttons button {
  width: 13px;
  height: 12px;
  border: 1px solid #b4c3da;
  background: #f2f6fc;
}
.mdi-buttons svg {
  width: 7px;
  height: 7px;
  display: block;
  margin: auto;
}

/* horizontal toolbars */
.toolbar-row {
  display: flex;
  height: 19px;
  flex: none;
}
.toolbar {
  display: flex;
  align-items: center;
  padding-right: 1px;
  border-right: 1px solid #a8a8a8;
  border-bottom: 1px solid #c8c8c8;
  background: #f4f4f4;
  margin-right: 2px;
}
.toolbar .grip {
  width: 3px;
  height: 15px;
  margin: 0 2px 0 3px;
  border: 1px solid #bdbdbd;
  border-width: 0 1px;
}
.tool {
  width: 16px;
  height: 16px;
  flex: none;
  display: flex;
  align-items: center;
  justify-content: center;
}
.tool.narrow {
  width: 10px;
}
.tool svg {
  width: 13px;
  height: 13px;
}
.tool.narrow svg {
  width: 8px;
  height: 8px;
}
.toolbar .sep {
  width: 1px;
  height: 15px;
  margin: 0 1px 0 2px;
  background: #b0b0b0;
}

select {
  appearance: none;
  border-radius: 0;
  background: #fff url("data:image/svg+xml,%3Csvg xmlns='http://www.w3.org/2000/svg' width='6' height='4'%3E%3Cpath d='M0 0h6L3 4z' fill='%23111'/%3E%3C/svg%3E") no-repeat right 3px center;
}
.toolbar select {
  height: 15px;
  padding-left: 4px;
  font-family: "Liberation Serif", "Noto Sans CJK SC", serif;
  font-size: 9px;
  color: #111;
}
.toolbar .style-select {
  width: 70px;
  padding-left: 3px;
}
.workspace-select {
  width: 122px;
}
.toolbar .plot-select {
  width: 84px;
  border: 1px solid #c4c4c4;
  background-color: #eee;
  background-image: url("data:image/svg+xml,%3Csvg xmlns='http://www.w3.org/2000/svg' width='6' height='4'%3E%3Cpath d='M0 0h6L3 4z' fill='%23aaa'/%3E%3C/svg%3E");
  color: #888;
  opacity: 1;
}
.combo {
  display: flex;
  align-items: center;
  height: 15px;
  padding-left: 3px;
  background: #fff;
}
.combo svg {
  width: 11px;
  height: 11px;
  flex: none;
}
.combo select {
  flex: 1;
  min-width: 0;
}
.layer-combo {
  width: 209px;
}
.layer-combo svg:last-of-type {
  width: 9px;
  height: 9px;
}
.color-combo {
  width: 103px;
}
.color-combo svg {
  width: 9px;
  height: 9px;
}
.color-combo select {
  padding-left: 1px;
}
.type-combo {
  width: 111px;
}
.weight-combo {
  width: 88px;
}
.rule {
  height: 1px;
  background: #222;
}
.type-combo .rule {
  width: 42px;
}
.weight-combo .rule {
  width: 24px;
}

/* docked toolbars */
.workspace {
  flex: 1;
  min-height: 0;
  display: flex;
}
.dock {
  width: 18px;
  flex: none;
  border-right: 1px solid #c4c4c4;
}
.dockbar {
  display: flex;
  flex-direction: column;
  align-items: center;
  padding-bottom: 3px;
  border-bottom: 1px solid #a8a8a8;
  background: #f6f6f6;
}
.dockbar .grip {
  width: 13px;
  height: 3px;
  margin: 2px 0;
  border: 1px solid #c2c2c2;
  border-width: 1px 0;
}
.dockbar .tool {
  height: 15px;
}
.dockbar .tool:nth-child(3n) {
  margin-bottom: 1px;
}
.dockbar.even .tool {
  margin-bottom: 0;
}
.dockbar .sep {
  width: 15px;
  height: 1px;
  margin: 2px 0;
  background: #c0c0c0;
}

/* drawing area */
.viewports {
  flex: 1;
  min-width: 0;
  display: grid;
  grid-template-columns: 1fr 1fr;
  grid-template-rows: 1fr 1fr;
  padding-top: 2px;
  margin-left: 1px;
  background: #777;
}
.viewport {
  min-width: 0;
  min-height: 0;
  overflow: hidden;
  border: 1px solid #b4b4b4;
  background: #000;
}
.viewport.active {
  border: 2px solid #fff;
  border-width: 2px 1px 0 2px;
}
.viewport svg {
  display: block;
  width: 100%;
  height: 100%;
}
.edge {
  stroke: #d8d8d8;
}
.picked {
  stroke: #fff;
  stroke-width: 3;
}
.picked-gap {
  stroke: #333;
  stroke-dasharray: 2 4;
}
.note {
  fill: #ed1c24;
  font-family: "Noto Sans CJK SC", sans-serif;
  font-size: 64px;
}
.note.small {
  font-size: 33px;
}
.ucs {
  stroke: #ddd;
}
.ucs text {
  fill: #ddd;
  stroke: none;
  font-size: 9px;
}
.ucs.dim {
  stroke: #666;
}
.ucs.dim text {
  fill: #666;
}

/* properties palette */
.palette {
  position: relative;
  width: 239px;
  flex: none;
  display: flex;
  flex-direction: column;
  overflow: hidden;
  border-left: 2px solid #b9b9b9;
  border-top: 1px solid #c4c4c4;
  background: #ebebeb;
}
.palette-grip {
  display: flex;
  align-items: center;
  gap: 4px;
  padding: 4px 5px 3px 9px;
}
.palette-grip i {
  flex: 1;
  height: 4px;
  border: 1px solid #b0b0b0;
  border-width: 1px 0;
}
.palette-grip button {
  width: 7px;
  height: 7px;
  border: 1px solid #555;
  border-radius: 1px;
}
.palette-grip svg {
  display: block;
  width: 5px;
  height: 5px;
}
.palette-top {
  display: flex;
  align-items: center;
  padding: 3px 6px 10px 9px;
}
.palette-top select {
  flex: 1;
  height: 16px;
  margin-right: 4px;
  padding-left: 3px;
}
.palette-top button {
  width: 17px;
  height: 16px;
  border: 1px solid #c9c9c9;
  background: #f1f1f1;
}
.palette-top svg {
  display: block;
  width: 11px;
  height: 11px;
  margin: auto;
}
.palette-body {
  flex: 1;
  min-height: 0;
  display: flex;
  justify-content: space-between;
  padding-left: 10px;
}
.groups {
  width: 213px;
}
.group {
  margin-bottom: 9px;
}
.group h2 {
  display: flex;
  justify-content: space-between;
  align-items: center;
  height: 18px;
  margin: 0;
  padding: 0 5px;
  border-radius: 5px 5px 0 0;
  background: #bfbfbf;
  font-size: 8px;
  font-weight: 700;
}
.group h2 svg {
  width: 8px;
  height: 8px;
}
.group table {
  width: 202px;
  margin-left: 11px;
  border-collapse: collapse;
  table-layout: fixed;
}
.group th, .group td {
  height: 17px;
  padding: 0 2px;
  border: 1px solid #c6c6c6;
  border-top: 0;
  line-height: 12px;
  text-align: left;
  font-weight: 400;
}
.group th {
  width: 85px;
  padding-left: 3px;
  vertical-align: top;
}
.group td {
  vertical-align: bottom;
}
.group td.edit {
  background: #fff;
}
.group .box {
  display: inline-block;
  width: 7px;
  height: 7px;
  margin-right: 5px;
  border: 1px solid #222;
  vertical-align: -1px;
}
.group .rule {
  display: inline-block;
  width: 42px;
  margin: 0 4px 0 2px;
  vertical-align: 3px;
}
.scrollbar {
  width: 8px;
  display: flex;
  flex-direction: column;
  background: #c2c2c2;
}
.scrollbar svg {
  width: 8px;
  height: 8px;
}
.scrollbar i {
  height: 18%;
  margin-top: auto;
  background: #fff;
}
.paw {
  position: absolute;
  right: 111px;
  bottom: 0;
  width: 56px;
  height: 32px;
  opacity: 0.85;
}
/* dark tab that pokes in at the right edge of the screen */
.side-tab {
  position: absolute;
  right: 0;
  top: 65%;
  width: 7px;
  height: 41px;
  background: linear-gradient(#20283a 50%, #3a7a62 50% 85%, #20283a 85%);
}
```
